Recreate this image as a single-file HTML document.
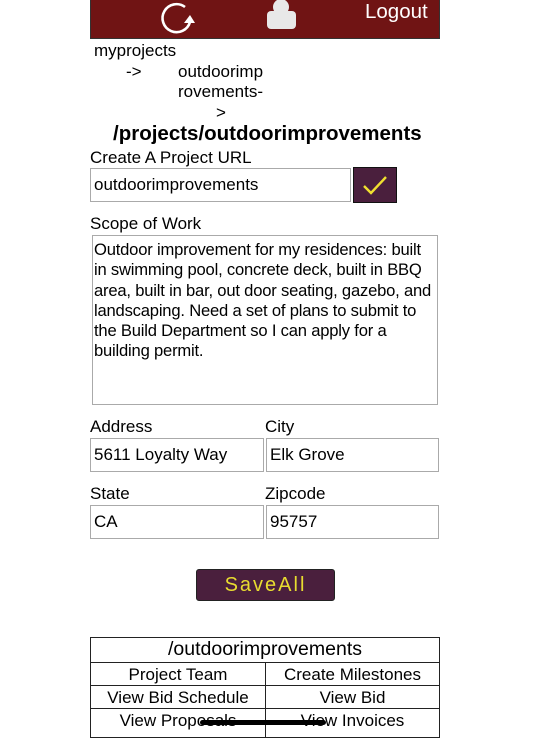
<!DOCTYPE html>
<html><head><meta charset="utf-8"><style>
*{margin:0;padding:0;box-sizing:border-box}
body{width:536px;height:729px;background:#fff;position:relative;overflow:hidden;font-family:"Liberation Sans",sans-serif;color:#000;font-size:17px}
.a{position:absolute;white-space:nowrap;line-height:1}
.box{position:absolute;border:1px solid #aaa;background:#fff;padding-left:3px;display:flex;align-items:center;font-size:17px}
.cell{position:absolute;border:1px solid #222;display:flex;align-items:center;justify-content:center;font-size:17px;line-height:1}
</style></head><body>
<div style="position:absolute;left:90px;top:0;width:350px;height:39px;background:#701414;border:1px solid #333;border-top:none"></div>
<svg style="position:absolute;left:158px;top:0" width="40" height="38" viewBox="0 0 40 38">
<path d="M27 7 A14 14 0 1 0 32 22" fill="none" stroke="#fff" stroke-width="2.6"/>
<path d="M26 23 L32 15 L37 23 Z" fill="#fff"/></svg>
<svg style="position:absolute;left:266px;top:0" width="31" height="30" viewBox="0 0 31 30">
<circle cx="15" cy="7" r="8" fill="#e8e8e8"/>
<rect x="1" y="11" width="29" height="18" rx="4" fill="#e8e8e8"/></svg>
<div class="a" style="left:365px;top:2px;font-size:20.5px;color:#fff">Logout</div>
<div class="a" style="left:94px;top:42px">myprojects</div>
<div class="a" style="left:126px;top:63px">-&gt;</div>
<div class="a" style="left:178px;top:63px">outdoorimp</div>
<div class="a" style="left:178px;top:83px">rovements-</div>
<div class="a" style="left:216px;top:104px">&gt;</div>
<div class="a" style="left:113px;top:124px;font-size:20.5px;font-weight:bold">/projects/outdoorimprovements</div>
<div class="a" style="left:90px;top:149px">Create A Project URL</div>
<div class="box" style="left:90px;top:168px;width:261px;height:34px">outdoorimprovements</div>
<div style="position:absolute;left:353px;top:167px;width:44px;height:36px;background:#4a1f3d;border:1px solid #111"></div>
<svg style="position:absolute;left:362px;top:173px" width="26" height="24" viewBox="0 0 26 24"><path d="M2 13 L9 20 L24 4" fill="none" stroke="#f0e030" stroke-width="2.4"/></svg>
<div class="a" style="left:90px;top:215px">Scope of Work</div>
<div style="position:absolute;left:92px;top:235px;width:346px;height:170px;border:1px solid #aaa;padding:4px 1px;font-size:16.6px;letter-spacing:-0.2px;line-height:20.3px;white-space:nowrap;overflow:hidden">Outdoor improvement for my residences: built<br>in swimming pool, concrete deck, built in BBQ<br>area, built in bar, out door seating, gazebo, and<br>landscaping. Need a set of plans to submit to<br>the Build Department so I can apply for a<br>building permit.</div>
<div class="a" style="left:90px;top:418px">Address</div>
<div class="a" style="left:265px;top:418px">City</div>
<div class="box" style="left:90px;top:438px;width:174px;height:34px">5611 Loyalty Way</div>
<div class="box" style="left:266px;top:438px;width:173px;height:34px">Elk Grove</div>
<div class="a" style="left:90px;top:485px">State</div>
<div class="a" style="left:265px;top:485px">Zipcode</div>
<div class="box" style="left:90px;top:505px;width:174px;height:34px">CA</div>
<div class="box" style="left:266px;top:505px;width:173px;height:34px">95757</div>
<div style="position:absolute;left:196px;top:569px;width:139px;height:32px;background:#4a1f3d;border:1px solid #222;border-radius:3px;color:#e8dc30;font-size:20px;letter-spacing:2px;display:flex;align-items:center;justify-content:center">SaveAll</div>
<div class="cell" style="left:90px;top:637px;width:350px;height:26px;font-size:19.5px">/outdoorimprovements</div>
<div class="cell" style="left:90px;top:662px;width:176px;height:24px">Project Team</div>
<div class="cell" style="left:265px;top:662px;width:175px;height:24px">Create Milestones</div>
<div class="cell" style="left:90px;top:685px;width:176px;height:24px">View Bid Schedule</div>
<div class="cell" style="left:265px;top:685px;width:175px;height:24px">View Bid</div>
<div class="cell" style="left:90px;top:708px;width:176px;height:30px;align-items:flex-start;padding-top:3px">View Proposals</div>
<div class="cell" style="left:265px;top:708px;width:175px;height:30px;align-items:flex-start;padding-top:3px">View Invoices</div>
<div style="position:absolute;left:200px;top:720px;width:126px;height:5px;border-radius:3px;background:#000"></div>
</body></html>
